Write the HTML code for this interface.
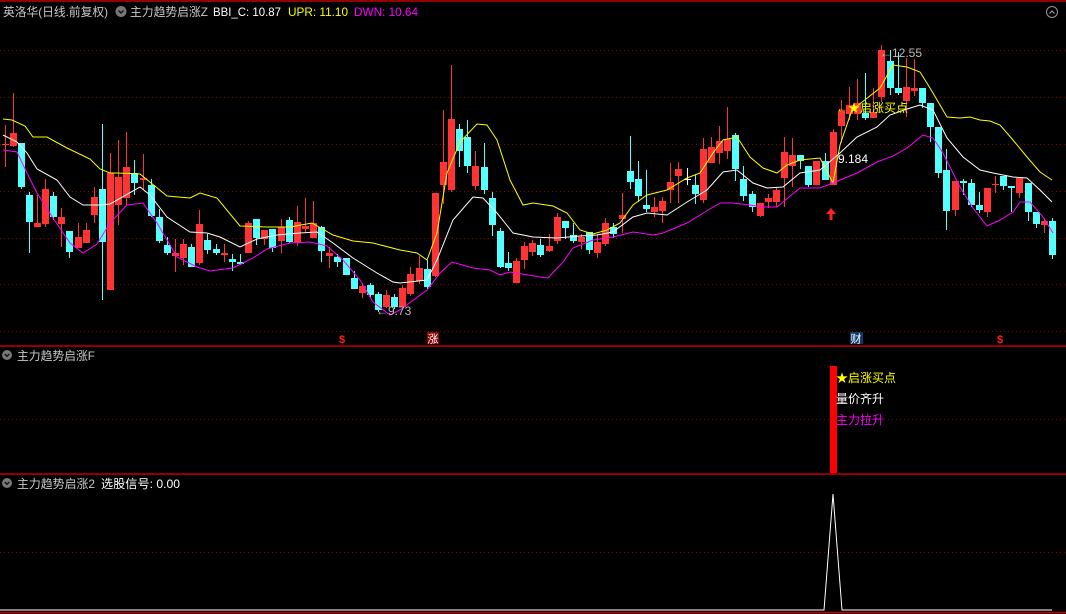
<!DOCTYPE html>
<html><head><meta charset="utf-8"><style>
html,body{margin:0;padding:0;background:#000;width:1066px;height:614px;overflow:hidden}
svg{display:block}
text{font-family:"Liberation Sans","Noto Sans CJK SC",sans-serif}
</style></head><body>
<svg id="s" width="1066" height="614" viewBox="0 0 1066 614" xmlns="http://www.w3.org/2000/svg">
<rect width="1066" height="614" fill="#000"/>
<g stroke="#8a0000" stroke-width="1" stroke-dasharray="1,3">
<line x1="0" y1="50.5" x2="1066" y2="50.5"/><line x1="0" y1="97.5" x2="1066" y2="97.5"/>
<line x1="0" y1="144.5" x2="1066" y2="144.5"/><line x1="0" y1="191.5" x2="1066" y2="191.5"/>
<line x1="0" y1="238.5" x2="1066" y2="238.5"/><line x1="0" y1="284.5" x2="1066" y2="284.5"/>
<line x1="0" y1="331.5" x2="1066" y2="331.5"/>
<line x1="0" y1="419.5" x2="1066" y2="419.5"/><line x1="0" y1="552.5" x2="1066" y2="552.5"/>
</g>
<g stroke="#c00000" stroke-width="1.5">
<line x1="0" y1="1" x2="1066" y2="1"/>
<line x1="0" y1="346" x2="1066" y2="346"/>
<line x1="0" y1="474" x2="1066" y2="474"/>
<line x1="0" y1="612.5" x2="1066" y2="612.5"/>
</g>
<g id="candles"></g>
<g fill="none" stroke-width="1">
<polyline stroke="#ffff00" points="3,119 12,120 25,126 33,137 47,137 67,148 90,159 100,169 110,173 117,173 140,174 167,196 190,198 200,193 217,198 240,226 267,227 290,227 312,223 333,235 353,241 373,243 400,250 417,253 427,260 437,233 447,173 460,142 477,124 487,125 497,140 510,180 523,205 533,203 553,206 567,213 580,230 593,234 607,230 620,223 633,205 647,195 667,190 687,178 700,173 713,153 723,140 737,137 750,157 763,168 777,173 787,165 800,160 820,158 833,183 840,145 852,110 880,88 893,65 907,67 920,72 930,88 947,117 960,118 970,117 980,120 990,121 1000,125 1013,140 1027,157 1040,172 1052,180"/>
<polyline stroke="#ffffff" points="3,135 17,142 27,153 37,169 57,180 70,197 83,205 100,205 110,204 140,187 150,195 167,217 190,232 207,233 220,237 240,247 257,239 277,235 300,233 317,232 333,243 353,258 377,273 393,282 400,283 427,280 437,260 453,220 473,197 483,198 497,213 513,233 533,237 557,238 580,236 597,235 613,232 633,217 647,213 667,215 687,202 707,190 723,172 737,170 753,183 767,188 783,187 800,173 820,170 840,153 857,137 877,127 890,115 907,109 920,105 933,110 947,138 963,157 980,170 993,173 1013,177 1027,178 1040,190 1052,202"/>
<polyline stroke="#ff00ff" points="3,150 17,152 27,173 37,193 53,218 70,243 83,253 97,244 110,223 127,205 143,203 157,223 177,257 197,267 210,271 233,268 253,258 267,249 290,243 310,242 327,246 343,260 360,280 373,302 390,315 400,310 427,290 440,273 452,262 473,268 490,270 500,275 510,272 540,277 548,278 563,262 573,248 593,240 613,237 633,232 653,235 663,233 687,223 700,215 720,203 733,203 750,205 763,207 777,207 800,188 820,188 833,183 857,173 877,162 893,156 907,148 923,135 933,138 943,153 960,187 973,208 987,226 1000,220 1013,212 1020,202 1030,202 1043,217 1053,233"/>
</g>
<!-- header -->
<text x="3" y="16" font-size="12" fill="#c8c8c8" textLength="105" lengthAdjust="spacingAndGlyphs">英洛华(日线.前复权)</text>
<circle cx="121" cy="11.5" r="5.5" fill="#777"/><path d="M118.5 10.5 L121 13 L123.5 10.5" stroke="#111" stroke-width="1.4" fill="none"/>
<text x="130" y="16" font-size="12" fill="#c8c8c8" textLength="78" lengthAdjust="spacingAndGlyphs">主力趋势启涨Z</text>
<text x="213" y="16" font-size="12" fill="#ffffff" textLength="68" lengthAdjust="spacingAndGlyphs">BBI_C: 10.87</text>
<text x="288" y="16" font-size="12" fill="#ffff00" textLength="60" lengthAdjust="spacingAndGlyphs">UPR: 11.10</text>
<text x="354" y="16" font-size="12" fill="#ff00ff" textLength="64" lengthAdjust="spacingAndGlyphs">DWN: 10.64</text>
<circle cx="1052" cy="12" r="5.5" fill="none" stroke="#999"/><path d="M1049.5 13.5 L1052 11 L1054.5 13.5" stroke="#999" stroke-width="1.2" fill="none"/>
<!-- labels -->
<text x="880" y="57" font-size="12" fill="#bbbbbb">←12.55</text>
<text x="838" y="163" font-size="12" fill="#ffffff">9.184</text>
<text x="376" y="315" font-size="12" fill="#bbbbbb">←9.73</text>
<text x="836" y="112" font-size="12" fill="#ffff00">←★启涨买点</text>
<path d="M831 208 L826 214 L829.5 214 L829.5 220 L832.5 220 L832.5 214 L836 214 Z" fill="#ff2020"/>
<text x="339" y="343" font-size="11" fill="#ff2020" font-weight="bold">$</text>
<rect x="427" y="332" width="12" height="12" fill="#8b0000"/><text x="427.5" y="342.5" font-size="11" fill="#fff">涨</text>
<rect x="850" y="332" width="13" height="12" fill="#0e3a6a"/><text x="850.5" y="342.5" font-size="11" fill="#fff">财</text>
<text x="997" y="343" font-size="11" fill="#ff2020" font-weight="bold">$</text>
<!-- panel 2 -->
<circle cx="7" cy="355" r="5" fill="#777"/><path d="M4.8 354 L7 356.3 L9.2 354" stroke="#111" stroke-width="1.3" fill="none"/>
<text x="17" y="360" font-size="12" fill="#c8c8c8" textLength="78" lengthAdjust="spacingAndGlyphs">主力趋势启涨F</text>
<rect x="830" y="366" width="7" height="107" fill="#ff0000"/>
<text x="836" y="382" font-size="12" fill="#ffff00">★启涨买点</text>
<text x="836" y="403" font-size="12" fill="#ffffff">量价齐升</text>
<text x="836" y="424" font-size="12" fill="#ff00ff">主力拉升</text>
<!-- panel 3 -->
<circle cx="7" cy="483" r="5" fill="#777"/><path d="M4.8 482 L7 484.3 L9.2 482" stroke="#111" stroke-width="1.3" fill="none"/>
<text x="17" y="488" font-size="12" fill="#c8c8c8" textLength="78" lengthAdjust="spacingAndGlyphs">主力趋势启涨2</text>
<text x="101" y="488" font-size="12" fill="#ffffff" textLength="79" lengthAdjust="spacingAndGlyphs">选股信号: 0.00</text>
<polyline fill="none" stroke="#fff" stroke-width="1" points="0,610 824,610 833,494 842,610 1052,610"/>
</svg>
<script>
var R="#ff3333",C="#54ffff";
var d=[
[144,145,125,167,R],[133,146,93,147,R],[143,187,143,189,C],[195,222,192,253,C],[223,227,195,227,R],
[189,224,179,227,R],[196,217,192,220,C],[217,224,208,247,R],[231,252,231,258,C],[237,248,223,248,R],
[230,243,223,243,R],[197,215,187,223,R],[189,242,124,300,C],[173,290,153,290,R],[177,205,140,225,R],
[167,198,132,205,R],[173,183,160,195,C],[178,180,154,190,R],[185,216,179,217,C],[217,241,209,243,C],
[245,253,237,255,C],[253,256,239,272,R],[244,258,239,265,R],[247,267,244,267,C],[224,263,210,265,R],
[240,250,234,254,C],[249,253,244,255,C],[253,255,244,262,R],[259,262,254,271,C],[262,264,254,265,C],
[223,253,221,253,R],[219,238,219,245,C],[230,239,230,245,R],[229,248,229,252,C],[227,241,219,253,R],
[220,242,217,243,C],[222,243,206,246,R],[226,229,198,232,R],[223,238,201,238,R],[227,251,226,262,C],
[253,256,247,268,R],[257,262,254,267,C],[258,275,258,275,C],[278,289,271,289,C],[286,293,283,298,R],
[285,295,283,297,C],[294,310,292,312,C],[295,307,290,308,R],[297,307,294,309,C],[288,307,285,307,R],
[274,294,267,296,R],[268,281,256,284,R],[269,287,260,289,C],[193,276,193,277,R],[162,185,110,204,R],
[119,190,65,192,R],[129,151,124,167,C],[137,166,120,173,C],[166,186,151,190,R],[167,190,143,194,C],
[198,225,192,236,C],[231,267,228,268,C],[263,268,252,271,C],[261,283,258,283,R],[246,260,242,269,R],
[243,252,240,256,R],[245,255,239,257,C],[246,251,234,252,R],[217,241,213,244,R],[221,228,221,239,C],
[235,241,223,243,C],[237,242,234,249,R],[232,250,232,254,C],[242,253,234,258,R],[223,244,218,246,R],
[227,234,223,238,C],[215,219,193,233,R],[171,182,136,189,C],[179,196,161,202,C],[205,209,170,212,C],
[207,212,197,217,R],[201,211,197,223,R],[182,190,163,203,R],[169,176,162,203,R],[179,180,168,185,"#ffffff"],
[185,194,175,204,C],[149,200,138,203,R],[147,163,137,163,R],[141,153,126,164,R],[139,151,107,159,R],
[135,169,133,181,C],[179,196,166,201,C],[194,207,191,212,C],[203,216,203,217,R],[198,202,194,208,R],
[190,202,187,207,R],[152,178,137,207,R],[155,166,138,187,R],[155,161,155,169,C],[166,185,166,187,C],
[161,185,161,185,R],[161,180,153,180,C],[132,185,129,185,R],[111,126,100,143,R],[105,114,87,120,R],
[103,114,79,120,R],[113,118,73,120,C],[112,118,88,118,R],[50,97,45,102,R],[61,88,50,95,C],
[88,93,52,95,C],[87,101,58,117,R],[88,91,59,96,R],[88,103,88,108,C],[103,127,103,142,C],
[127,173,127,178,C],[170,211,149,230,C],[181,210,181,216,R],[181,183,179,195,C],[183,205,179,207,C],
[205,210,192,213,C],[188,212,188,217,R],[184,185,176,193,R],[176,186,176,190,C],[186,188,186,212,C],
[178,193,178,198,R],[183,212,183,221,C],[212,224,212,228,C],[221,225,218,233,R],[221,255,218,259,C]];
var g=document.getElementById("candles"),h="";
for(var i=0;i<d.length;i++){var c=d[i],x=Math.round(4.5+8.12*i);
h+='<line x1="'+(x+0.5)+'" y1="'+c[2]+'" x2="'+(x+0.5)+'" y2="'+c[3]+'" stroke="'+c[4]+'" stroke-width="1"/>';
var bh=Math.max(1,c[1]-c[0]);h+='<rect x="'+(x-3)+'" y="'+c[0]+'" width="7" height="'+bh+'" fill="'+c[4]+'"/>';}
g.innerHTML=h;
</script>
</body></html>
